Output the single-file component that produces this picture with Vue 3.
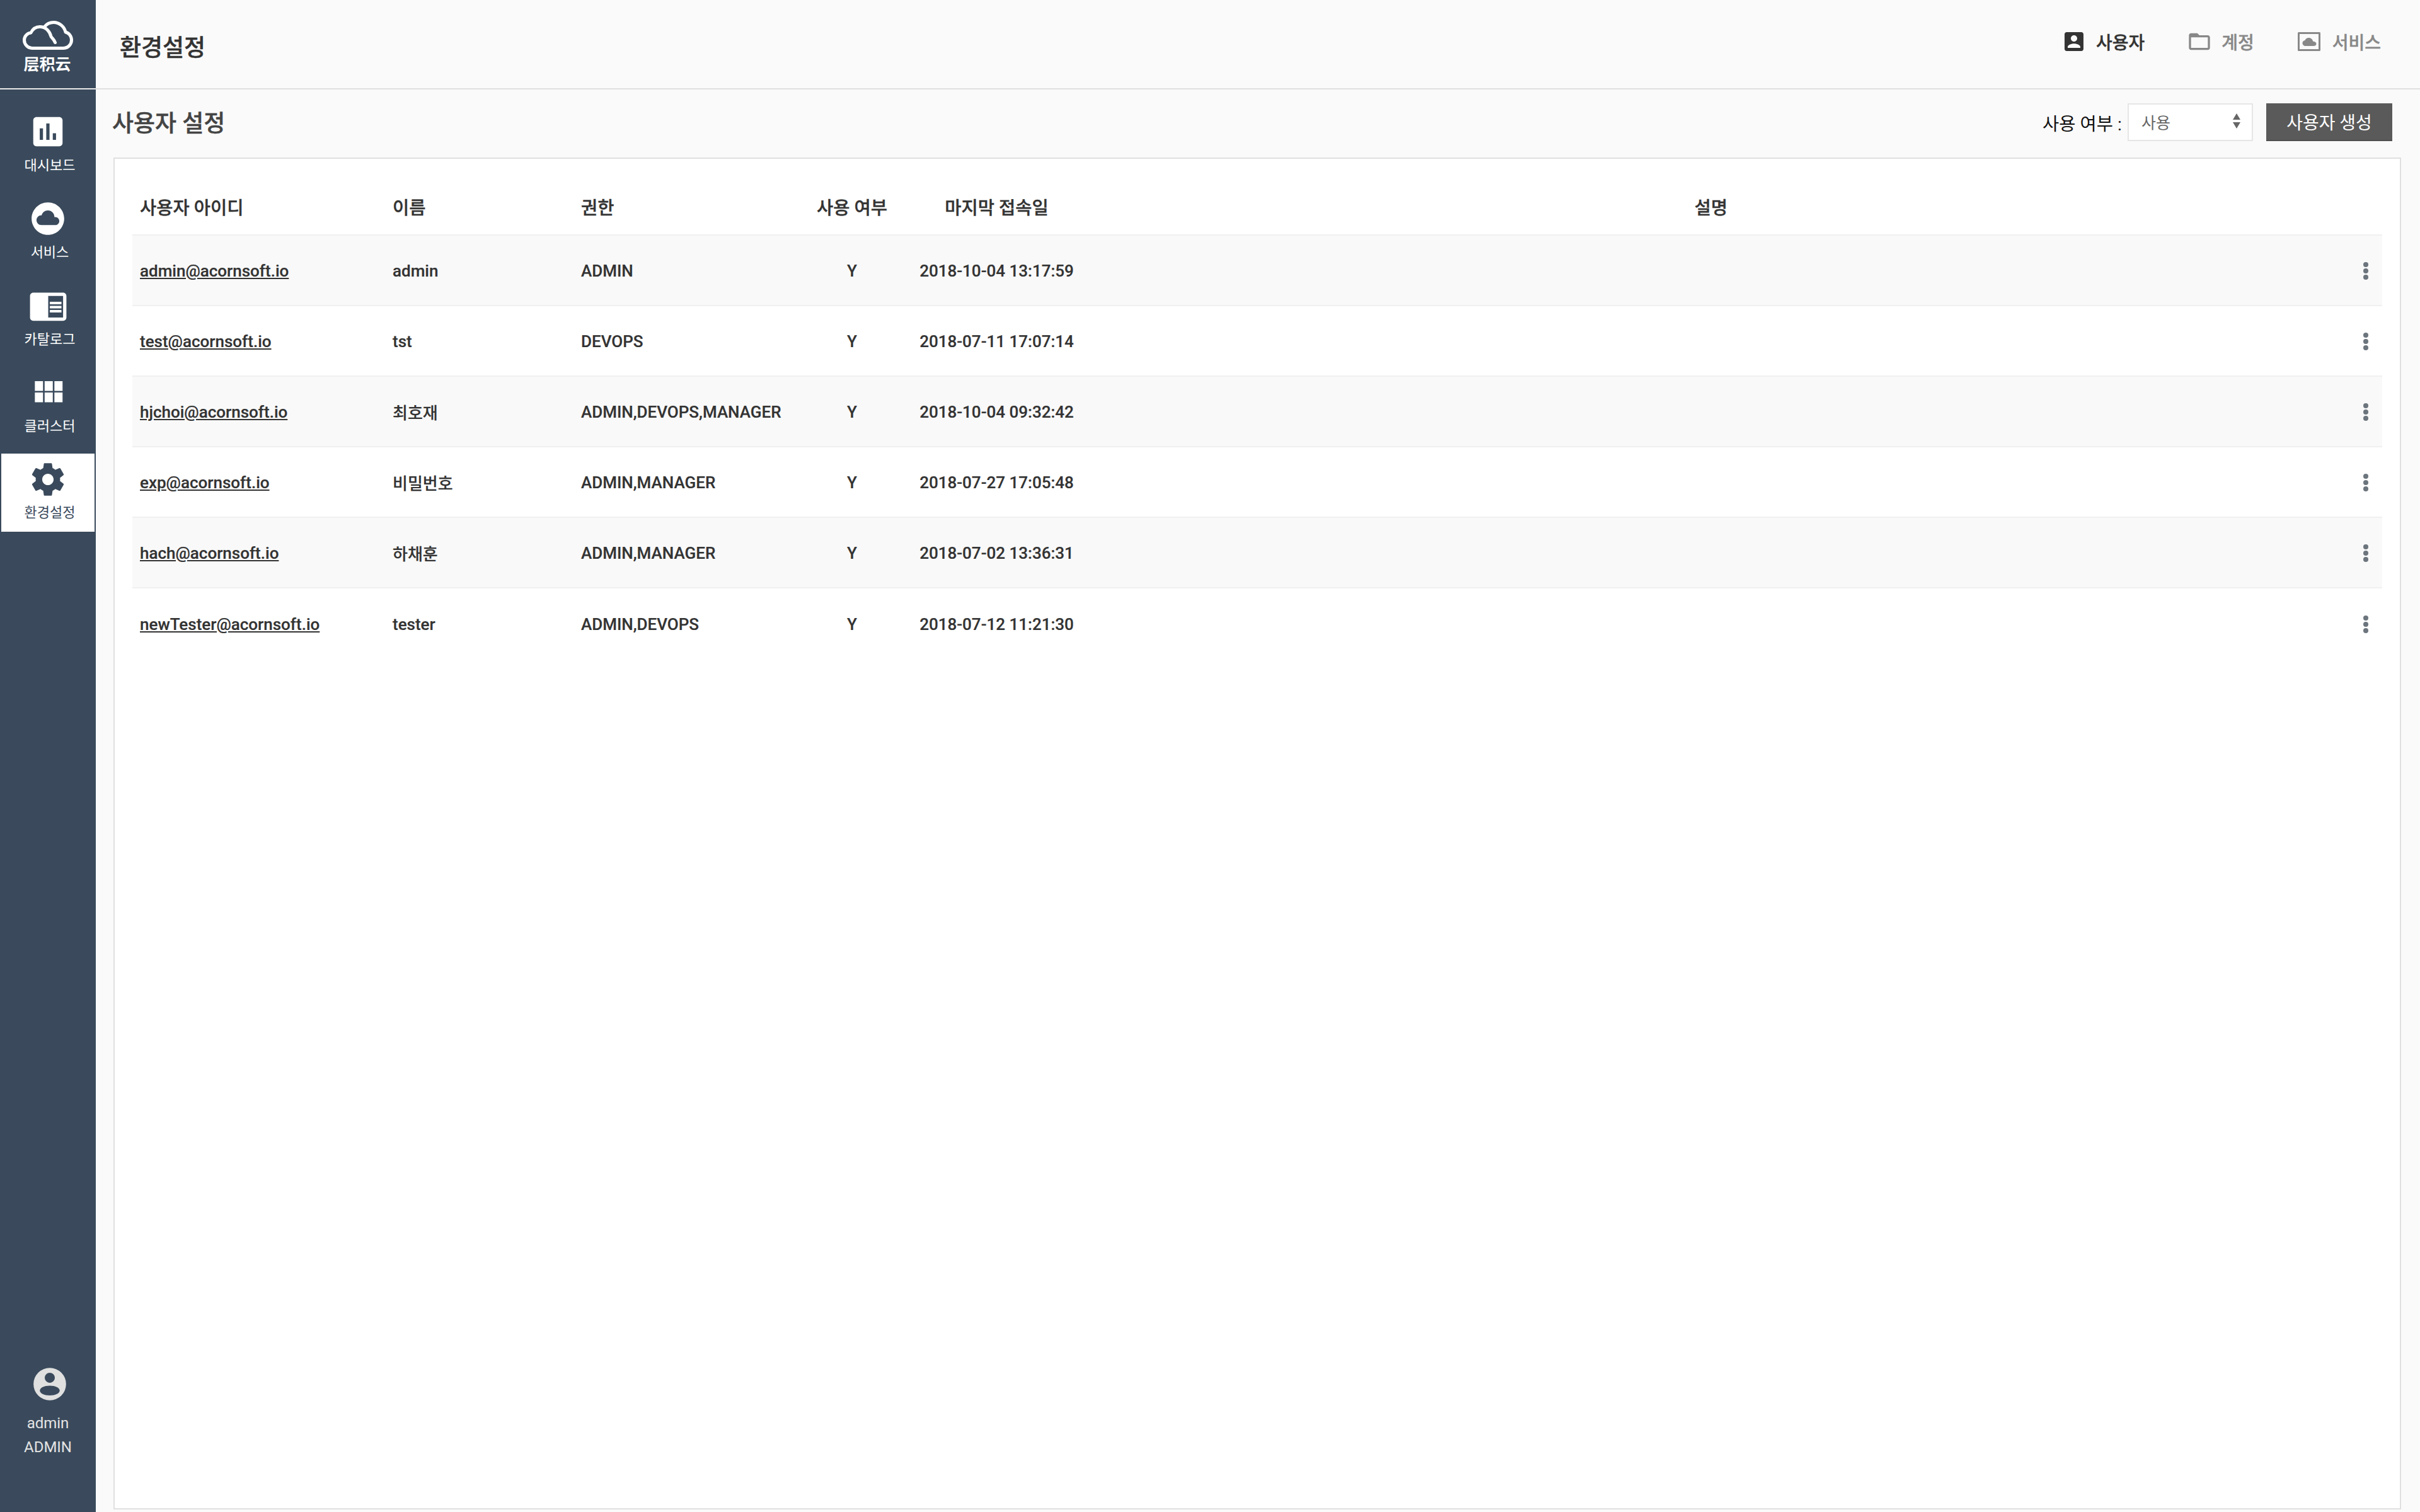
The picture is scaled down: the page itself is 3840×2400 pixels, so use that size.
<script setup>
const navItems = [
  { label: '대시보드', view: '0 0 24 24', size: 62, d: 'M19 3H5c-1.1 0-2 .9-2 2v14c0 1.1.9 2 2 2h14c1.1 0 2-.9 2-2V5c0-1.1-.9-2-2-2zM9 17H7v-7h2v7zm4 0h-2V7h2v10zm4 0h-2v-4h2v4z' },
  { label: '서비스', view: '0 0 24 24', size: 62, d: 'M12 2C6.47 2 2 6.47 2 12s4.47 10 10 10 10-4.47 10-10S17.53 2 12 2zm4.5 14H8c-1.66 0-3-1.34-3-3s1.34-3 3-3l.14.01C8.58 8.28 10.13 7 12 7c2.21 0 4 1.79 4 4h.5c1.38 0 2.5 1.12 2.5 2.5S17.88 16 16.5 16z' },
  { label: '카탈로그', view: '0 0 24 24', size: 63, d: 'M13 12h7v1.5h-7zm0-2.5h7V11h-7zm0 5h7V16h-7zM21 4H3c-1.1 0-2 .9-2 2v13c0 1.1.9 2 2 2h18c1.1 0 2-.9 2-2V6c0-1.1-.9-2-2-2zm0 15h-9V6h9v13z' },
  { label: '클러스터', view: '0 0 24 24', size: 62, d: 'M4 11h5V5H4v6zm0 7h5v-6H4v6zm6 0h5v-6h-5v6zm6 0h5v-6h-5v6zm-6-7h5V5h-5v6zm6-6v6h5V5h-5z' },
  { label: '환경설정', view: '0 0 24 24', size: 62, active: true, d: 'M19.43 12.98c.04-.32.07-.64.07-.98s-.03-.66-.07-.98l2.11-1.65c.19-.15.24-.42.12-.64l-2-3.46c-.12-.22-.39-.3-.61-.22l-2.49 1c-.52-.4-1.08-.73-1.69-.98l-.38-2.65C14.46 2.18 14.25 2 14 2h-4c-.25 0-.46.18-.49.42l-.38 2.65c-.61.25-1.17.59-1.69.98l-2.49-1c-.23-.09-.49 0-.61.22l-2 3.46c-.13.22-.07.49.12.64l2.11 1.65c-.04.32-.07.65-.07.98s.03.66.07.98l-2.11 1.65c-.19.15-.24.42-.12.64l2 3.46c.12.22.39.3.61.22l2.49-1c.52.4 1.08.73 1.69.98l.38 2.65c.03.24.24.42.49.42h4c.25 0 .46-.18.49-.42l.38-2.65c.61-.25 1.17-.59 1.69-.98l2.49 1c.23.09.49 0 .61-.22l2-3.46c.12-.22.07-.49-.12-.64l-2.11-1.65zM12 15.5c-1.93 0-3.5-1.57-3.5-3.5s1.57-3.5 3.5-3.5 3.5 1.57 3.5 3.5-1.57 3.5-3.5 3.5z' }
]
const users = [
  { id: 'admin@acornsoft.io', name: 'admin', role: 'ADMIN', date: '2018-10-04 13:17:59' },
  { id: 'test@acornsoft.io', name: 'tst', role: 'DEVOPS', date: '2018-07-11 17:07:14' },
  { id: 'hjchoi@acornsoft.io', name: '최호재', role: 'ADMIN,DEVOPS,MANAGER', date: '2018-10-04 09:32:42' },
  { id: 'exp@acornsoft.io', name: '비밀번호', role: 'ADMIN,MANAGER', date: '2018-07-27 17:05:48' },
  { id: 'hach@acornsoft.io', name: '하채훈', role: 'ADMIN,MANAGER', date: '2018-07-02 13:36:31' },
  { id: 'newTester@acornsoft.io', name: 'tester', role: 'ADMIN,DEVOPS', date: '2018-07-12 11:21:30' }
]
</script>

<template>
  <div class="app">
    <aside class="side">
      <div class="logo">
        <svg class="logo-mark" width="80" height="46" viewBox="0 0 80 46" fill="none" stroke="#fff" stroke-width="5" stroke-linecap="round" stroke-linejoin="round">
          <path d="M16 43.5H64C72 43.5 77.5 37.5 77.5 30.5C77.5 24 73 19 68 18C66 9 58 2.5 49 2.5C43 2.5 38 5 34.5 9.5" />
          <path d="M16 43.5C8 43.5 2.5 37.5 2.5 30.5C2.5 24 8 19.5 13 19C16 13 21 9.5 27 9.5C37 9.5 43 17 45 25C46.500 27.500 50 30 51.500 34.500" />
        </svg>
        <span class="logo-text">层积云</span>
      </div>
      <nav class="nav">
        <a v-for="item in navItems" :key="item.label" class="nav-item" :class="{ active: item.active }">
          <span class="nav-icon">
            <svg :width="item.size" :height="item.size" :viewBox="item.view" fill="currentColor"><path :d="item.d" /></svg>
          </span>
          <span class="nav-label">{{ item.label }}</span>
        </a>
      </nav>
      <div class="account">
        <svg width="62" height="62" viewBox="0 0 24 24" fill="#e0e0e0"><path fill-rule="evenodd" d="M12 2a10 10 0 1 0 0 20a10 10 0 0 0 0-20zM12 5a3.100 3.100 0 1 1 0 6.200a3.100 3.100 0 0 1 0-6.200zM12 13c3.400 0 6.100 1.300 6.100 3s-2.700 3-6.100 3-6.100-1.300-6.100-3 2.700-3 6.100-3z" /></svg>
        <span class="account-name">admin</span>
        <span class="account-role">ADMIN</span>
      </div>
    </aside>

    <main class="main">
      <header class="topbar">
        <h1 class="page-title">환경설정</h1>
        <div class="tabs">
          <a class="tab on">
            <svg width="40" height="40" viewBox="0 0 24 24" fill="currentColor"><path d="M3 5v14c0 1.100.89 2 2 2h14c1.100 0 2-.9 2-2V5c0-1.100-.9-2-2-2H5c-1.110 0-2 .9-2 2zm12 4c0 1.660-1.340 3-3 3s-3-1.340-3-3 1.340-3 3-3 3 1.340 3 3zm-9 8c0-2 4-3.100 6-3.100s6 1.100 6 3.100v1H6v-1z" /></svg>
            <span>사용자</span>
          </a>
          <a class="tab">
            <svg width="40" height="40" viewBox="0 0 24 24" fill="currentColor"><path d="M20 6h-8l-2-2H4c-1.100 0-1.990.9-1.990 2L2 18c0 1.100.9 2 2 2h16c1.100 0 2-.9 2-2V8c0-1.100-.9-2-2-2zm0 12H4V8h16v10z" /></svg>
            <span>계정</span>
          </a>
          <a class="tab svc">
            <svg width="40" height="40" viewBox="0 0 40 40" fill="currentColor"><path fill-rule="evenodd" d="M3.500 5h33a1.500 1.500 0 0 1 1.500 1.500v27a1.500 1.500 0 0 1-1.500 1.500h-33A1.500 1.500 0 0 1 2 33.500v-27A1.500 1.500 0 0 1 3.500 5zM5 8v24h30V8z" /><path d="M13 27c-2.800 0-5-2-5-4.600 0-2.300 1.800-4.200 4-4.500 1-2.400 3.400-3.900 6-3.900 3.400 0 6.300 2.500 6.600 5.800h.4c2.500 0 5 1.700 5 3.700 0 2.400-2 3.500-4.500 3.500z" transform="translate(1.500 0)" /></svg>
            <span>서비스</span>
          </a>
        </div>
      </header>

      <div class="toolbar">
        <h2 class="section-title">사용자 설정</h2>
        <div class="filters">
          <label class="filter-label" for="use-filter">사용 여부 :</label>
          <div class="select-wrap">
            <select id="use-filter" class="select">
              <option>사용</option>
            </select>
            <svg class="select-arrows" width="14" height="24" viewBox="0 0 14 24" fill="#666"><path d="M7 0l6 10H1zM7 24L1 14h12z" /></svg>
          </div>
          <button class="create" type="button">사용자 생성</button>
        </div>
      </div>

      <section class="card">
        <div class="row head">
          <div class="cell">사용자 아이디</div>
          <div class="cell">이름</div>
          <div class="cell">권한</div>
          <div class="cell center">사용 여부</div>
          <div class="cell center">마지막 접속일</div>
          <div class="cell center">설명</div>
          <div class="cell"></div>
        </div>
        <div v-for="u in users" :key="u.id" class="row body">
          <div class="cell"><a class="link">{{ u.id }}</a></div>
          <div class="cell">{{ u.name }}</div>
          <div class="cell">{{ u.role }}</div>
          <div class="cell center">Y</div>
          <div class="cell center">{{ u.date }}</div>
          <div class="cell"></div>
          <div class="cell dots"><i></i><i></i><i></i></div>
        </div>
      </section>
    </main>
  </div>
</template>

<style>
html, body { margin: 0; padding: 0; }
</style>

<style scoped>
.app {
  display: flex;
  height: 2400px;
  width: 3840px;
  overflow: hidden;
  background: #fafafa;
  font-family: Roboto, "Noto Sans CJK KR", sans-serif;
  color: #333;
}
.side {
  width: 152px;
  flex: none;
  background: #3a4a5c;
  display: flex;
  flex-direction: column;
  color: #fff;
}
.logo {
  height: 142px;
  box-sizing: border-box;
  border-bottom: 2px solid #e8e8e8;
  display: flex;
  flex-direction: column;
  align-items: center;
  padding-top: 33px;
}
.logo-text {
  font-family: "Noto Sans CJK SC", sans-serif;
  font-size: 25px;
  line-height: 30px;
  font-weight: 700;
  margin: 6px 0 0 -2px;
}
.nav {
  display: flex;
  flex-direction: column;
  gap: 14px;
  padding-top: 26px;
}
.nav-item {
  height: 124px;
  margin: 0 2px;
  display: flex;
  flex-direction: column;
  align-items: center;
  color: #fff;
}
.nav-item.active {
  background: #fff;
  color: #3a4a5c;
}
.nav-icon {
  height: 52px;
  margin-top: 15px;
  display: flex;
  align-items: center;
  justify-content: center;
}
.nav-label {
  font-size: 22px;
  line-height: 30px;
  margin: 13px 0 0 6px;
  font-weight: 400;
}
.nav-item.active .nav-label { margin-top: 12px; }
.account {
  margin-top: auto;
  padding-bottom: 84px;
  display: flex;
  flex-direction: column;
  align-items: center;
  color: #e4e4e4;
  font-size: 24px;
  line-height: 38px;
}
.account svg { margin: 0 0 12px 6px; display: block; }
.main {
  flex: 1;
  min-width: 0;
  display: flex;
  flex-direction: column;
}
.topbar {
  height: 142px;
  flex: none;
  box-sizing: border-box;
  border-bottom: 2px solid #e0e0e0;
  display: flex;
  align-items: center;
  justify-content: space-between;
  padding: 0 62px 0 38px;
}
.page-title {
  margin: 6px 0 0;
  font-size: 37px;
  font-weight: 500;
  color: #333;
  -webkit-text-stroke: 0.4px currentColor;
}
.tabs {
  display: flex;
  gap: 72px;
  margin-top: -8px;
}
.tab {
  display: flex;
  align-items: center;
  gap: 20px;
  font-size: 28px;
  font-weight: 500;
  color: #888;
  -webkit-text-stroke: 0.4px currentColor;
}
.tab svg { margin: 0 -5px; }
.tab.svc { gap: 22px; }
.tab.on { color: #333; }
.toolbar {
  height: 108px;
  flex: none;
  box-sizing: border-box;
  display: flex;
  align-items: center;
  justify-content: space-between;
  padding: 0 44px 4px 26px;
}
.section-title {
  margin: -3px 0 0;
  font-size: 37px;
  font-weight: 500;
  color: #444;
  -webkit-text-stroke: 0.4px currentColor;
}
.filters {
  display: flex;
  align-items: center;
}
.filter-label {
  font-size: 28.500px;
  color: #111;
  margin-right: 9px;
}
.select-wrap {
  position: relative;
  width: 199px;
  height: 60px;
  margin-right: 21px;
}
.select {
  appearance: none;
  width: 100%;
  height: 100%;
  box-sizing: border-box;
  border: 2px solid #e6e6e6;
  background: #fff;
  border-radius: 0;
  padding: 3px 0 0 20px;
  font: 400 25px Roboto, "Noto Sans CJK KR", sans-serif;
  color: #666;
}
.select-arrows {
  position: absolute;
  right: 19px;
  top: 16px;
  pointer-events: none;
}
.create {
  width: 200px;
  height: 60px;
  border: 0;
  border-bottom: 2px solid #505050;
  background: #5a5a5a;
  color: #fff;
  font: 400 28px Roboto, "Noto Sans CJK KR", sans-serif;
  padding: 0;
}
.card {
  flex: 1;
  min-height: 0;
  margin: 0 30px 4px 28px;
  box-sizing: border-box;
  border: 2px solid #e0e0e0;
  background: #fff;
  padding: 0 28px;
}
.row {
  display: grid;
  grid-template-columns: 401px 299px 374px 136px 323px 1944px 93px;
  align-items: center;
  box-sizing: border-box;
  border-bottom: 2px solid #f0f0f0;
}
.head {
  height: 122px;
  padding-top: 31px;
  font-size: 28.500px;
  font-weight: 500;
  color: #333;
  -webkit-text-stroke: 0.4px currentColor;
}
.body {
  height: 112px;
  padding-top: 1px;
  font-size: 26px;
  font-weight: 500;
  color: #333;
  -webkit-text-stroke: 0.2px currentColor;
}
.body:nth-child(even) { background: #f9f9f9; }
.body:last-child { border-bottom: 0; }
.cell { padding-left: 12px; white-space: nowrap; }
.center { padding-left: 0; text-align: center; }
.link { text-decoration: underline; color: #333; }
.dots {
  display: flex;
  flex-direction: column;
  align-items: flex-end;
  gap: 2px;
  padding: 0 22px 0 0;
}
.dots i {
  width: 8px;
  height: 8px;
  border-radius: 50%;
  background: #6c757d;
}
</style>
